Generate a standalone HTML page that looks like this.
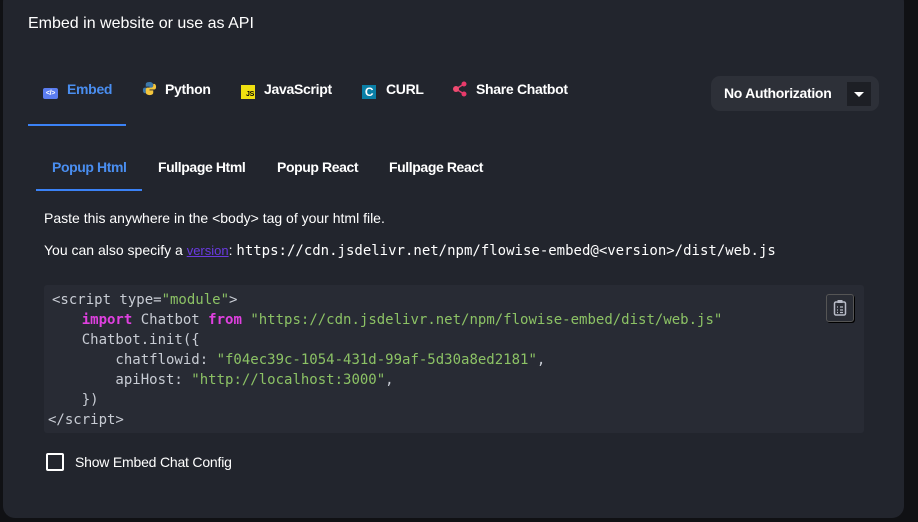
<!DOCTYPE html>
<html><head><meta charset="utf-8"><style>
*{margin:0;padding:0;box-sizing:border-box}
body{width:918px;height:522px;background:#101114;font-family:"Liberation Sans",sans-serif;color:#fff;position:relative;overflow:hidden}
.panel{position:absolute;left:3px;top:-10px;width:901px;height:528px;background:#22252d;border-radius:12px}
.t{position:absolute;font-size:15px;white-space:nowrap}
.tab{position:absolute;font-size:14px;font-weight:bold;top:81px;white-space:nowrap;letter-spacing:-0.3px}
.sub{position:absolute;font-size:14px;top:159px;white-space:nowrap;font-weight:bold;letter-spacing:-0.4px}
.code{position:absolute;left:44px;top:285px;width:820px;height:148px;background:#282b34;border-radius:3px;font-family:"DejaVu Sans Mono",monospace;font-size:14px;line-height:20px;color:#c8ccd4;padding:5px 0 0 4px;white-space:pre}
.k{color:#e040e0;font-weight:bold}.s{color:#8cc265}
.mono{font-family:"DejaVu Sans Mono",monospace;font-size:14px}
</style></head><body>
<div class="panel"></div>
<div class="t" style="left:28px;top:15px;font-size:16px">Embed in website or use as API</div>

<div class="tab" style="left:43px;color:#4a8ef0"><span style="display:inline-block;width:15px;height:11px;background:#5b7df0;border-radius:2px;vertical-align:-1px;margin-right:9px;font-size:7px;color:#fff;text-align:center;line-height:11px">&lt;/&gt;</span>Embed</div>
<div style="position:absolute;left:28px;top:124px;width:98px;height:2px;background:#3b82f6"></div>
<div class="tab" style="left:142px"><svg width="15" height="15" viewBox="0 0 16 16" style="vertical-align:-2px;margin-right:8px"><path d="M8 1C4 1 4 3 4 4v2h4v1H3C1 7 1 9 1 10c0 2 1 3 2 3h1v-2c0-1 1-2 2-2h4c1 0 2-1 2-2V4c0-2-2-3-4-3z" fill="#3c78aa"/><path d="M8 15c4 0 4-2 4-3v-2H8V9h5c2 0 2-2 2-3 0-2-1-3-2-3h-1v2c0 1-1 2-2 2H6c-1 0-2 1-2 2v3c0 2 2 3 4 3z" fill="#f4c63d"/></svg>Python</div>
<div class="tab" style="left:241px"><span style="display:inline-block;width:14px;height:14px;background:#f0e010;vertical-align:-2px;margin-right:9px;color:#000;font-size:7px;line-height:19px;text-align:right;padding-right:1px">JS</span>JavaScript</div>
<div class="tab" style="left:362px"><span style="display:inline-block;width:14px;height:14px;background:#0a7fa6;vertical-align:-2px;margin-right:10px;color:#fff;font-size:12px;line-height:14px;text-align:center">C</span>CURL</div>
<div class="tab" style="left:453px"><svg width="15" height="16" viewBox="0 0 15 16" style="vertical-align:-3px;margin-right:8px"><line x1="3" y1="8" x2="11" y2="3" stroke="#e04070" stroke-width="1.5"/><line x1="3" y1="8" x2="11" y2="13" stroke="#e04070" stroke-width="1.5"/><circle cx="3" cy="8" r="3" fill="#f04a70"/><circle cx="11" cy="3" r="2.5" fill="#e83a6a"/><circle cx="11" cy="13" r="2.5" fill="#e83a6a"/></svg>Share Chatbot</div>

<div style="position:absolute;left:711px;top:76px;width:168px;height:35px;background:#2d3038;border-radius:9px"></div>
<div class="t" style="left:724px;top:85px;font-size:14px;font-weight:bold;letter-spacing:-0.3px">No Authorization</div>
<div style="position:absolute;left:847px;top:82px;width:24px;height:24px;background:#1d1f25"></div>
<div style="position:absolute;left:854px;top:92px;border-left:5px solid transparent;border-right:5px solid transparent;border-top:5px solid #fff"></div>

<div class="sub" style="left:52px;color:#4a8ef0">Popup Html</div>
<div class="sub" style="left:158px">Fullpage Html</div>
<div class="sub" style="left:277px">Popup React</div>
<div class="sub" style="left:389px">Fullpage React</div>
<div style="position:absolute;left:36px;top:189px;width:106px;height:2px;background:#3b82f6"></div>

<div class="t" style="left:44px;top:210px;font-size:14px">Paste this anywhere in the &lt;body&gt; tag of your html file.</div>
<div class="t" style="left:44px;top:242px;font-size:14px">You can also specify a <span style="color:#6a3ae0;text-decoration:underline;font-size:13px">version</span>: <span class="mono">https://cdn.jsdelivr.net/npm/flowise-embed@&lt;version&gt;/dist/web.js</span></div>

<div class="code"><span style="margin-left:4px">&lt;script type=<span class="s">"module"</span>&gt;</span>
    <span class="k">import</span> Chatbot <span class="k">from</span> <span class="s">"https://cdn.jsdelivr.net/npm/flowise-embed/dist/web.js"</span>
    Chatbot.init({
        chatflowid: <span class="s">"f04ec39c-1054-431d-99af-5d30a8ed2181"</span>,
        apiHost: <span class="s">"http://localhost:3000"</span>,
    })
&lt;/script&gt;</div>
<div style="position:absolute;left:826px;top:294px;width:28px;height:28px;background:#2a2d35;border:1px solid #555;border-radius:3px;box-shadow:1px 1px 0 #000"></div>
<svg style="position:absolute;left:833px;top:299px" width="14" height="18" viewBox="0 0 14 18"><rect x="1.5" y="3" width="11" height="13" rx="1.5" fill="none" stroke="#b8bcc8" stroke-width="1.5"/><rect x="4.5" y="1" width="5" height="3" fill="#b8bcc8"/><path d="M4 8h1M4 11h1M4 13.5h1M7 8h3M7 11h3M7 13.5h3" stroke="#b8bcc8" stroke-width="1.3"/></svg>

<div style="position:absolute;left:46px;top:453px;width:18px;height:18px;border:2px solid #fff;border-radius:2px"></div>
<div class="t" style="left:75px;top:454px;font-size:14px;letter-spacing:-0.2px">Show Embed Chat Config</div>
</body></html>
